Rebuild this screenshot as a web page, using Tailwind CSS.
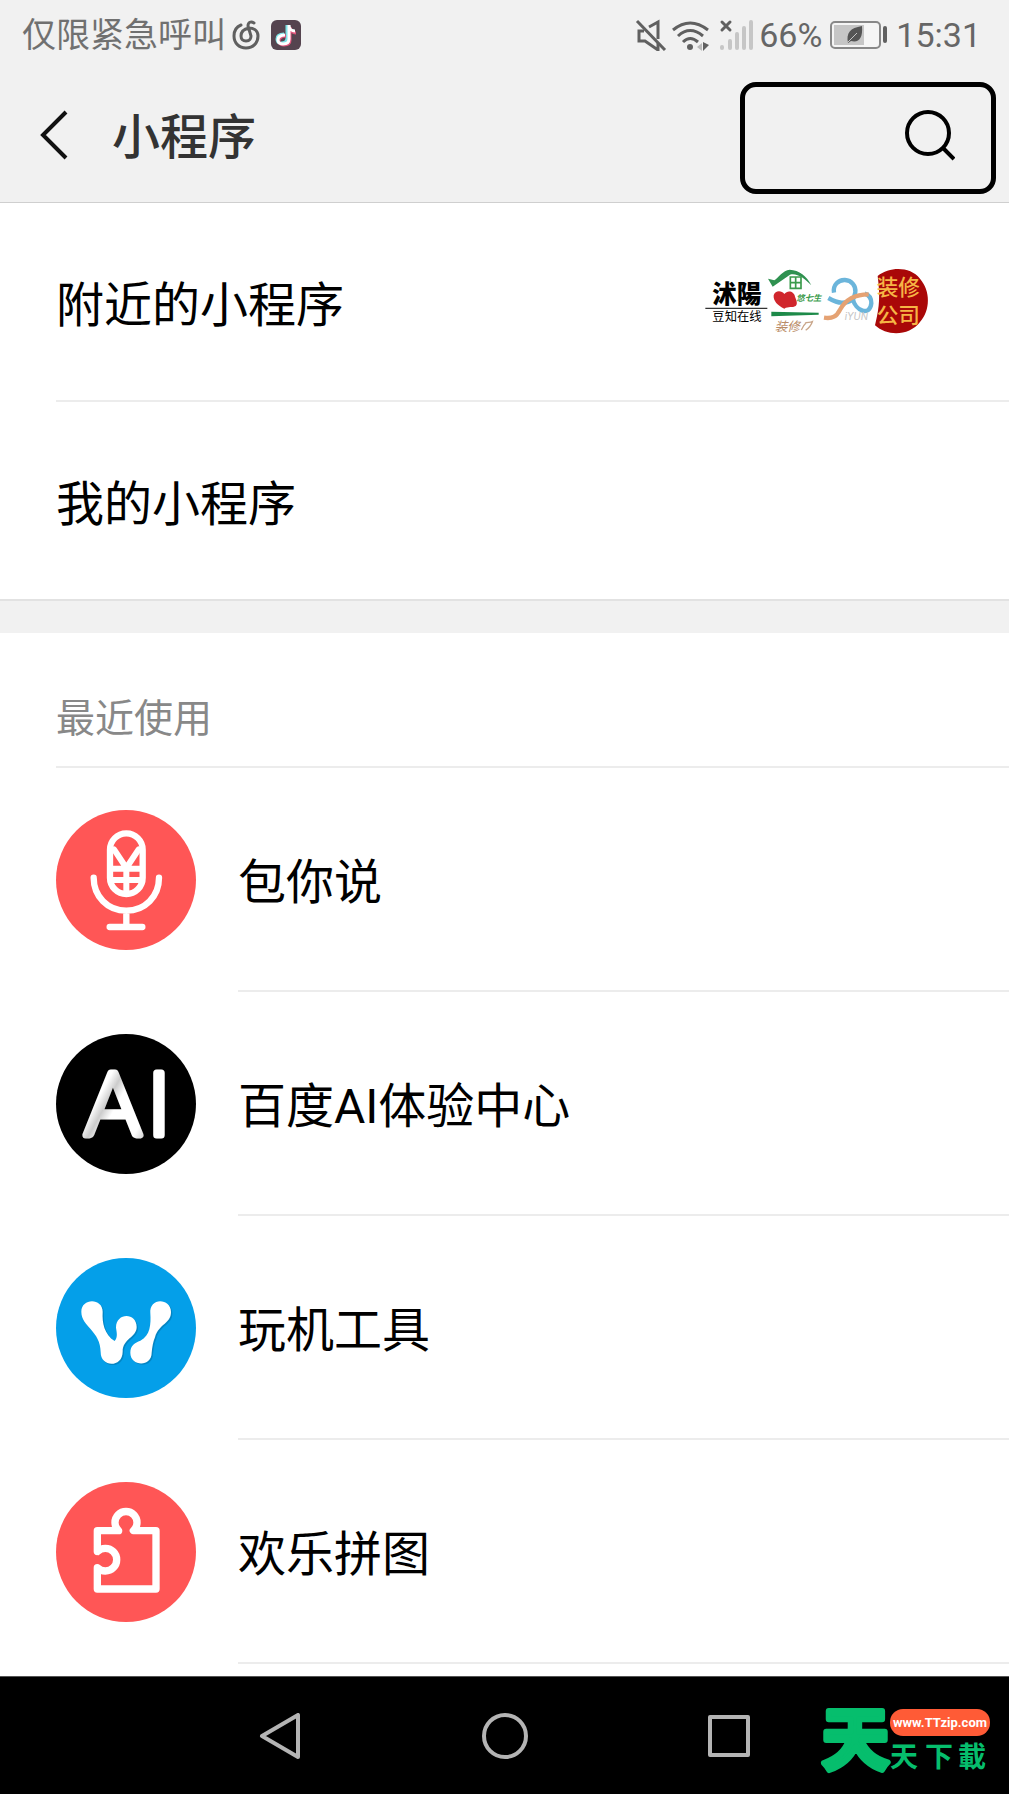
<!DOCTYPE html>
<html lang="zh-CN">
<head>
    <meta charset="UTF-8">
    <meta name="viewport" content="width=device-width, initial-scale=1.0">
    <title>小程序</title>
    <script src="https://cdn.jsdelivr.net/npm/@tailwindcss/browser@4"></script>
</head>
<body class="bg-white text-black font-[Roboto,'Noto_Sans_CJK_SC',sans-serif]">
    <div class="min-h-screen flex flex-col">
        <header class="bg-[#f1f1f1] border-b border-[#cfcfcf]">
            <!-- Status bar -->
            <div class="h-[70px] flex items-center justify-between pl-[22px] pr-7 text-[34px] leading-none text-[#666]">
                <div class="flex items-center">
                    <span class="text-[#707070]">仅限紧急呼叫</span>
                    <svg class="ml-1 w-8 h-8" viewBox="0 0 32 32" fill="none" stroke="#606060" stroke-width="3" stroke-linecap="round">
                        <path d="M11 6C6 8 4 12 4 17c0 7 5 12 12 12s12-5 12-12c0-6-5-8-9-8-5 1-8 4-8 8 0 3 2 5 5 5 4 0 5-3 5-5L18 7c0-4 3-5 6-3"/>
                    </svg>
                    <svg class="ml-2 w-8 h-8" viewBox="0 0 32 32">
                        <rect x="1" y="1" width="30" height="30" rx="6" fill="#55444f"/>
                        <g fill="none" stroke-width="3">
                            <path d="M14 15c-5 0-7 2-7 5s2 4 4 4c4 0 6-2 6-5V6c0 4 3 6 7 6" stroke="#7fe3e6"/>
                            <path d="M16 17c-5 0-7 2-7 5s3 4 5 4c4 0 6-2 6-5V8c0 4 3 6 6 6" stroke="#e0567c"/>
                            <path d="M15 16c-5 0-7 2-7 5s3 4 5 4c4 0 6-2 6-5V6c0 4 3 6 6 6" stroke="#fff"/>
                        </g>
                    </svg>
                </div>
                <div class="flex items-center">
                    <svg class="w-8 h-8" viewBox="0 0 32 32" fill="none" stroke="#606060" stroke-width="3">
                        <path d="M2 2l28 29"/>
                        <path d="M9 12H4v10h6l13 9v-7M14 8l9-5v17"/>
                    </svg>
                    <svg class="ml-1 w-10 h-8" viewBox="0 0 40 32" fill="none" stroke="#606060" stroke-width="3">
                        <path d="M2 11Q19-3 37 11M7 17Q19 6 32 17M12 23q7-7 15 0"/>
                        <circle cx="19" cy="28" r="3" fill="#606060" stroke="none"/>
                        <path d="M31 24v8l-5-4z" fill="#bbb" stroke="none"/>
                        <path d="M32 23v9l6-6z" fill="#606060" stroke="none"/>
                    </svg>
                    <svg class="ml-2 w-9 h-8" viewBox="0 0 36 32" fill="none" stroke="#c6c6c6" stroke-width="4" stroke-linecap="round">
                        <path d="M3 28v1M11 22v7M18 15v14M25 9v20M32 3v26"/>
                        <path d="M3 3l8 8M11 3l-8 8" stroke="#606060" stroke-width="3"/>
                    </svg>
                    <span class="ml-1">66%</span>
                    <svg class="ml-2 w-[58px] h-7" viewBox="0 0 58 28">
                        <rect x="1" y="1" width="49" height="26" rx="4" fill="#f5f5f5" stroke="#888" stroke-width="2"/>
                        <rect x="4" y="4" width="30" height="20" fill="#c6c6c6"/>
                        <path d="M32 5c1 12-3 17-11 15l-3 2c-2-10 2-15 14-17z" fill="#555"/>
                        <path d="M18 21l9-9" stroke="#c6c6c6"/>
                        <rect x="53" y="5" width="4" height="17" rx="2" fill="#606060"/>
                    </svg>
                    <span class="ml-2">15:31</span>
                </div>
            </div>
            <!-- Title bar -->
            <div class="h-[132px] flex items-center pl-9 pr-[13px] pt-1">
                <button type="button" aria-label="返回" class="w-9 h-14">
                    <svg class="w-9 h-14" viewBox="0 0 36 56" fill="none" stroke="#111" stroke-width="4">
                        <path d="M30 2L7 25l23 23"/>
                    </svg>
                </button>
                <h1 class="ml-10 text-[48px] leading-none font-medium text-[#333]">小程序</h1>
                <button type="button" aria-label="搜索" class="ml-auto w-64 h-28 pr-9 pb-1 flex items-center justify-end border-5 border-black rounded-2xl">
                    <svg class="w-[52px] h-[52px]" viewBox="0 0 52 52" fill="none" stroke="#000" stroke-width="4">
                        <circle cx="25" cy="23" r="21"/>
                        <path d="M39 37l12 12"/>
                    </svg>
                </button>
            </div>
        </header>

        <main class="text-[48px] leading-none">
            <section class="pl-14 border-b-2 border-[#e2e2e2]">
                <a href="#" class="h-[199px] flex items-center justify-between border-b-2 border-[#ececec] pr-[59px]">
                    <span class="pt-2">附近的小程序</span>
                    <svg class="w-[260px] h-[100px]" viewBox="0 4 780 300" font-family="'Noto Sans CJK SC', sans-serif">
                        <text x="66" y="158" font-size="74" font-weight="900" fill="#000">沭陽</text>
                        <path d="M46 173h186" stroke="#333" stroke-width="4"/>
                        <text x="67" y="211" font-size="37" fill="#000">豆知在线</text>
                        <!-- House with a heart -->
                        <path d="M234 84l14 24 52-36c20-6 45 12 64 32-14-28-36-46-65-47-20 2-34 24-46 32z" fill="#2f9150"/>
                        <path d="M301 79h32v34h-32zM317 79v34M301 96h32" fill="none" stroke="#3b9b4c" stroke-width="5"/>
                        <path d="M283 174c-20-8-34-24-32-40 4-16 24-16 32-4 10-14 30-8 32 8 6 14 8 22 2 28-10 6-22 0-34 8z" fill="#d0262c"/>
                        <text x="319" y="151" font-size="25" font-weight="700" font-style="italic" fill="#3b9b4c">悠七生</text>
                        <path d="M244 183l142 3v6l-142 5z" fill="#1d8a49"/>
                        <text x="254" y="240" font-size="38" font-style="italic" fill="#b98b66">装修</text>
                        <path d="M334 238c6-12 10-18 16-23M345 217c8-4 14 0 22-4-4 12-12 20-20 26" fill="none" stroke="#c9a68a" stroke-width="4"/>
                        <!-- Looped ribbon -->
                        <g fill="none" stroke-width="13">
                            <path d="M432 126c-4-24 14-39 33-38 20 1 33 18 31 36-2 22-15 33-41 32-14 0-26-6-40-14" stroke="#6bb5db"/>
                            <path d="M488 143c8 38 52 55 56 15 0-14-6-25-20-29" stroke="#6bb5db"/>
                            <path d="M402 201c26 4 38-4 48-24 14-26 38-46 86-46" stroke="#e5a273"/>
                        </g>
                        <text x="464" y="208" font-size="29" font-style="italic" fill="#c4c4c4" font-family="Inter, sans-serif">iYUN</text>
                        <!-- Red seal -->
                        <path d="M563 76C600 47 660 47 690 84c32 37 32 94 0 130-32 42-98 44-135 10 15-60 15-90 8-148z" fill="#a90808"/>
                        <text x="560" y="134" font-size="65" font-weight="500" fill="#f6b545">装修</text>
                        <text x="560" y="217" font-size="65" font-weight="500" fill="#f6b545">公司</text>
                    </svg>
                </a>
                <a href="#" class="h-[197px] flex items-center pt-2">我的小程序</a>
            </section>
            <div class="h-8 bg-[#f1f1f1]"></div>

            <h2 class="ml-14 h-[135px] pt-10 flex items-center border-b-2 border-[#ececec] text-[39px] font-normal text-[#888]">最近使用</h2>
            <ul>
                <li>
                    <a href="#" class="pl-14 flex items-center">
                        <svg class="w-[140px] h-[140px]" viewBox="48 60 420 420" fill="none" stroke="#fff" stroke-width="19" stroke-linecap="round">
                            <circle cx="258" cy="270" r="210" fill="#ff5656" stroke="none"/>
                            <rect x="210" y="130" width="98" height="182" rx="49"/>
                            <path d="M161 263c0 56 42 99 98 99s98-43 98-99M259 362v46M209 411h98"/>
                            <path d="M222 178l37 56 37-56M259 234v75M218 236h82M218 270h82" stroke-width="18"/>
                        </svg>
                        <span class="ml-[42px] h-[224px] flex-1 flex items-center pt-2 border-b-2 border-[#ececec]">包你说</span>
                    </a>
                </li>
                <li>
                    <a href="#" class="pl-14 flex items-center">
                        <svg class="w-[140px] h-[140px]" viewBox="0 0 140 140" font-family="Lato, sans-serif" font-size="86" font-weight="300">
                            <defs>
                                <linearGradient id="shine" x1="0" y1="0" x2="1" y2="1">
                                    <stop offset="0" stop-color="#fff"/>
                                    <stop offset=".35" stop-color="#fff"/>
                                    <stop offset=".45" stop-color="#ccc"/>
                                    <stop offset=".55" stop-color="#fff"/>
                                    <stop offset=".85" stop-color="#fff"/>
                                    <stop offset="1" stop-color="#bbb"/>
                                </linearGradient>
                            </defs>
                            <circle cx="70" cy="70" r="70" fill="#000"/>
                            <text x="57" y="101" text-anchor="middle" fill="url(#shine)" stroke="url(#shine)" stroke-width="7" stroke-linejoin="round">A</text>
                            <text x="103" y="101" text-anchor="middle" fill="#fff" stroke="#fff" stroke-width="7" stroke-linejoin="round">I</text>
                        </svg>
                        <span class="ml-[42px] h-[224px] flex-1 flex items-center pt-2 border-b-2 border-[#ececec]">百度AI体验中心</span>
                    </a>
                </li>
                <li>
                    <a href="#" class="pl-14 flex items-center">
                        <svg class="w-[140px] h-[140px]" viewBox="48 56 420 420">
                            <circle cx="258" cy="266" r="210" fill="#049fe9"/>
                            <g fill="#0385c4" transform="translate(4 4)">
                                <path d="M124 217c0-42 64-42 64 0-2 34 5 68 36 88 10-12 6-26 4-40 0-46 62-46 62-2 0 32-42 34-42 74 0 48-66 48-66 2 0-66-58-76-58-122z"/>
                                <path d="M331 222c-4-50 62-46 62-4 0 36-36 34-48 76-6 14-8 28-10 46 0 44-64 42-64 0 0-22 14-30 30-36 30-14 32-50 30-82z"/>
                            </g>
                            <path fill="#fff" d="M124 217c0-42 64-42 64 0-2 34 5 68 36 88 10-12 6-26 4-40 0-46 62-46 62-2 0 32-42 34-42 74 0 48-66 48-66 2 0-66-58-76-58-122z"/>
                            <path fill="#fff" d="M331 222c-4-50 62-46 62-4 0 36-36 34-48 76-6 14-8 28-10 46 0 44-64 42-64 0 0-22 14-30 30-36 30-14 32-50 30-82z"/>
                        </svg>
                        <span class="ml-[42px] h-[224px] flex-1 flex items-center pt-2 border-b-2 border-[#ececec]">玩机工具</span>
                    </a>
                </li>
                <li>
                    <a href="#" class="pl-14 flex items-center">
                        <svg class="w-[140px] h-[140px]" viewBox="48 54 420 420">
                            <circle cx="258" cy="264" r="210" fill="#ff5656"/>
                            <path d="M172 263v-63h64a33 33 0 1 1 44 0h68v175H172v-64a34 34 0 1 0 0-48z" fill="none" stroke="#fff" stroke-width="22" stroke-linejoin="round"/>
                            <path d="M160 274h14v26h-14z" fill="#ff5656"/>
                        </svg>
                        <span class="ml-[42px] h-[224px] flex-1 flex items-center pt-2 border-b-2 border-[#ececec]">欢乐拼图</span>
                    </a>
                </li>
            </ul>
        </main>

        <!-- Navigation bar -->
        <nav class="relative mt-auto h-[118px] bg-black border-t border-[#555] flex items-center justify-center gap-[178px]">
            <button type="button" aria-label="返回键">
                <svg class="w-[46px] h-[46px]" viewBox="0 0 46 46" fill="none" stroke="#b4b4b4" stroke-width="4" stroke-linejoin="round">
                    <path d="M40 2v42L4 23z"/>
                </svg>
            </button>
            <button type="button" aria-label="主屏幕">
                <svg class="w-[46px] h-[46px]" viewBox="0 0 46 46" fill="none" stroke="#b4b4b4" stroke-width="4">
                    <circle cx="23" cy="23" r="21"/>
                </svg>
            </button>
            <button type="button" aria-label="最近任务">
                <svg class="w-[46px] h-[46px]" viewBox="0 0 46 46" fill="none" stroke="#b4b4b4" stroke-width="4" stroke-linejoin="round">
                    <rect x="4" y="4" width="38" height="38"/>
                </svg>
            </button>
            <!-- Site badge -->
            <svg class="absolute right-0 bottom-0 w-[209px] h-[118px]" viewBox="0 6 209 118" font-family="'Noto Sans CJK TC', sans-serif" fill="#06be6d">
                <text x="22" y="94" font-size="67" font-weight="700" stroke="#06be6d" stroke-width="6" stroke-linejoin="round">天</text>
                <g font-size="28" font-weight="700">
                    <text x="90" y="97">天</text>
                    <text x="125" y="97">下</text>
                    <text x="158" y="97">載</text>
                </g>
                <rect x="90" y="39" width="100" height="27" rx="13" fill="#ff5b36"/>
                <text x="140" y="57" font-size="13" font-weight="700" font-family="Roboto, sans-serif" text-anchor="middle" fill="#fff">www.TTzip.com</text>
            </svg>
        </nav>
    </div>
</body>
</html>
